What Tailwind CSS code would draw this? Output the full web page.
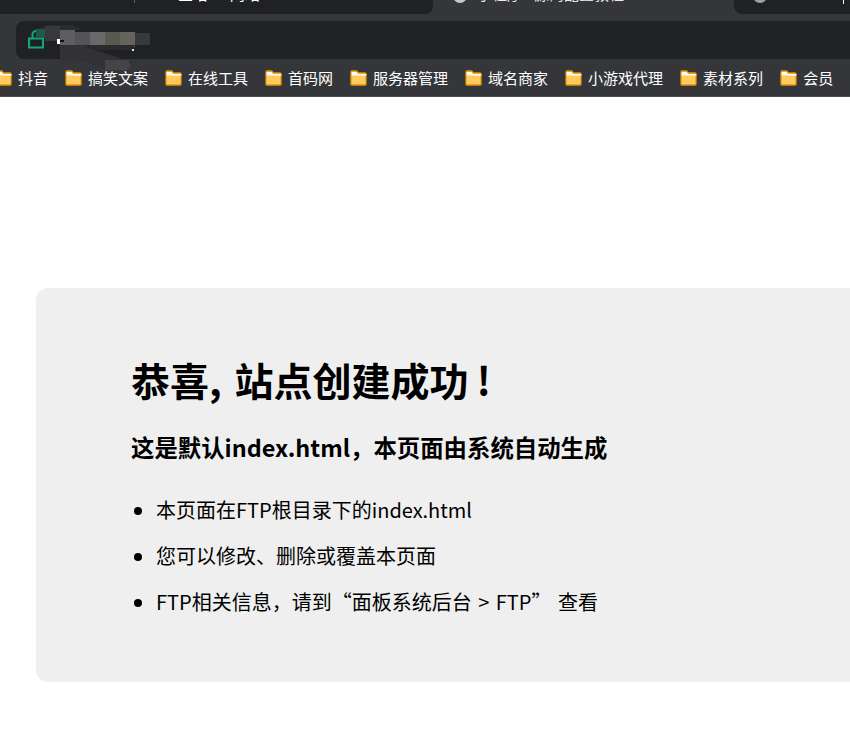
<!DOCTYPE html>
<html lang="zh-CN">
<head>
    <meta charset="UTF-8">
    <meta name="viewport" content="width=device-width, initial-scale=1.0">
    <title>恭喜，站点创建成功</title>
    <script src="https://cdn.jsdelivr.net/npm/@tailwindcss/browser@4"></script>
</head>
<body class="bg-white h-[756px] w-[850px] overflow-hidden font-['Noto_Sans_CJK_SC','Noto_Sans',sans-serif]">
    <svg width="0" height="0" class="absolute">
        <defs>
            <g id="folder">
                <path d="M1 4V15a1 1 0 0 0 1 1h13a1 1 0 0 0 1-1V5a1 1 0 0 0-1-1H8.500L6.500 2H2a1 1 0 0 0-1 1z" fill="#ffcb5c" stroke="#e8940c" stroke-width="1.300"/>
                <path d="M1.700 6.500V3h4.600l2 2h8v1.500z" fill="#fff"/>
            </g>
        </defs>
    </svg>

    <!-- tab strip, only the bottom of the tabs is in frame -->
    <div class="flex h-[14px] bg-[#35363a] text-white overflow-hidden">
        <div class="w-[433px] flex shrink-0 rounded-br-lg bg-[#202124] text-[15px] leading-[14px]">
            <div class="w-[135px] border-r border-[#5f6368] h-[3px]"></div>
            <div class="pl-[43px] -mt-[13px]">宝塔 一 网站</div>
        </div>
        <div class="w-[301px] flex shrink-0 text-[15px] leading-[14px] pl-[20px]">
            <div class="w-[14px] h-[14px] -mt-[11px] rounded-full bg-[#c4c7cc] shrink-0"></div>
            <div class="pl-[10px] -mt-[13px] text-[#e8eaed]">小程序 - 源码配置教程</div>
        </div>
        <div class="flex-1 flex justify-between bg-[#202124] rounded-bl-lg pl-[19px] pr-[6px]">
            <div class="w-[14px] h-[14px] -mt-[11px] rounded-full bg-[#9aa0a6]"></div>
            <div class="w-px h-[4px] bg-white"></div>
        </div>
    </div>

    <!-- toolbar with the address bar -->
    <div class="h-[45px] bg-[#35363a] pt-[7px] pl-4">
        <div class="relative h-[38px] rounded-l-lg bg-[#202124]">
            <svg class="absolute left-[12px] top-[9px]" width="18" height="20" viewBox="0 0 18 20">
                <path d="M4.500 8V5a3.500 3.500 0 0 1 7-1" fill="none" stroke="#10a87c" stroke-width="2"/>
                <rect x="1" y="8.500" width="14" height="9" fill="none" stroke="#10a87c" stroke-width="2"/>
            </svg>
            <!-- smudged out address, runs down over the bookmarks -->
            <svg class="absolute left-[20px] top-[4px] z-10" width="116" height="46" viewBox="0 0 116 46">
                <path d="M1 4 12 0h24l12 5H1z" fill="#2a2b2e"/>
                <rect x="0" y="4" width="9" height="9" fill="#1d5a48"/>
                <rect x="9" y="1" width="15" height="15" fill="#36383a"/>
                <rect x="24" y="5" width="15" height="15" fill="#5f5d64"/>
                <rect x="39" y="7" width="15" height="15" fill="#535458"/>
                <rect x="54" y="7" width="15" height="15" fill="#69696b"/>
                <rect x="69" y="7" width="15" height="15" fill="#585a50"/>
                <rect x="84" y="7" width="15" height="15" fill="#66635c"/>
                <rect x="99" y="8" width="15" height="12" fill="#363a3a"/>
                <path d="M44 20h55l-3 5H60z" fill="#2a2b2e"/>
                <path d="M24 20h20l52 17-2 7H69L44 35H24z" fill="#323234"/>
                <path d="M69 35h23l3 6-4 4H69z" fill="#454548"/>
                <rect x="21" y="14" width="3" height="5" fill="#fff"/>
                <rect x="24" y="15" width="4" height="2" fill="#111"/>
                <rect x="96" y="24" width="2" height="2" fill="#dfe8f5"/>
            </svg>
        </div>
    </div>

    <!-- bookmarks -->
    <nav class="flex items-center gap-[17px] h-[38px] pt-px -ml-[5px] bg-[#35363a] border-b border-[#4a4b4f] text-[15px] text-white whitespace-nowrap">
        <a class="flex items-center gap-[6px] shrink-0"><svg width="17" height="18" viewBox="0 0 17 18" class="shrink-0"><use href="#folder"/></svg>抖音</a>
        <a class="flex items-center gap-[6px] shrink-0"><svg width="17" height="18" viewBox="0 0 17 18" class="shrink-0"><use href="#folder"/></svg>搞笑文案</a>
        <a class="flex items-center gap-[6px] shrink-0"><svg width="17" height="18" viewBox="0 0 17 18" class="shrink-0"><use href="#folder"/></svg>在线工具</a>
        <a class="flex items-center gap-[6px] shrink-0"><svg width="17" height="18" viewBox="0 0 17 18" class="shrink-0"><use href="#folder"/></svg>首码网</a>
        <a class="flex items-center gap-[6px] shrink-0"><svg width="17" height="18" viewBox="0 0 17 18" class="shrink-0"><use href="#folder"/></svg>服务器管理</a>
        <a class="flex items-center gap-[6px] shrink-0"><svg width="17" height="18" viewBox="0 0 17 18" class="shrink-0"><use href="#folder"/></svg>域名商家</a>
        <a class="flex items-center gap-[6px] shrink-0"><svg width="17" height="18" viewBox="0 0 17 18" class="shrink-0"><use href="#folder"/></svg>小游戏代理</a>
        <a class="flex items-center gap-[6px] shrink-0"><svg width="17" height="18" viewBox="0 0 17 18" class="shrink-0"><use href="#folder"/></svg>素材系列</a>
        <a class="flex items-center gap-[6px] shrink-0"><svg width="17" height="18" viewBox="0 0 17 18" class="shrink-0"><use href="#folder"/></svg>会员</a>
    </nav>

    <!-- page content -->
    <main class="pt-[191px] pl-9">
        <div class="w-[900px] h-[394px] rounded-xl bg-[#efefef] text-black pl-[95px] pt-[61px]">
            <h1 class="text-[39px] leading-[60px] font-bold [word-spacing:4px]">恭喜, 站点创建成功<span class="ml-[8px]">!</span></h1>
            <h2 class="text-[23.400px] leading-[32px] font-bold mt-[22px]">这是默认index.html，本页面由系统自动生成</h2>
            <ul class="list-disc pl-[25px] text-[20px] leading-[30px] mt-[32px] space-y-[16px]">
                <li>本页面在FTP根目录下的index.html</li>
                <li>您可以修改、删除或覆盖本页面</li>
                <li class="[word-spacing:2px]">FTP相关信息，请到“面板系统后台 &gt; FTP” 查看</li>
            </ul>
        </div>
    </main>
</body>
</html>
